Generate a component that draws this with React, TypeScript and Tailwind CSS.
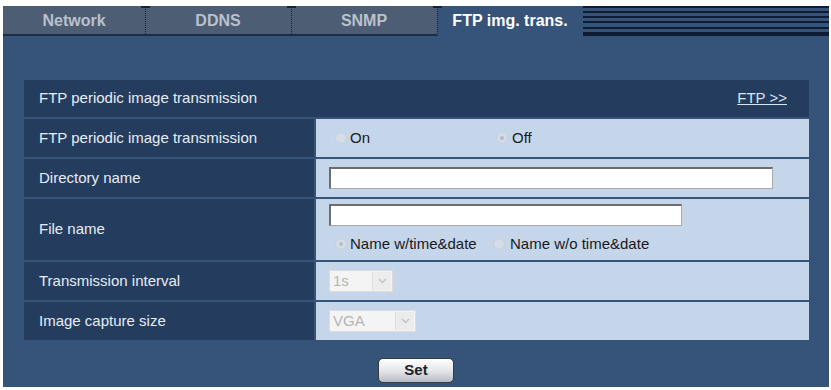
import React from "react";

const font = { fontFamily: '"Liberation Sans", Arial, sans-serif' };

function Radio({ checked }: { checked?: boolean }) {
  return (
    <span className="relative inline-block w-[12px] h-[12px] rounded-full bg-[#d3dce7] border border-[#c7d1dd] shrink-0">
      {checked && (
        <span className="absolute left-[3px] top-[3px] w-[4px] h-[4px] rounded-full bg-[#b3bdca]" />
      )}
    </span>
  );
}

function Select({ value, width }: { value: string; width: string }) {
  return (
    <div className={`flex h-[22px] border border-[#dcdcdc] bg-[#f4f4f4] ${width}`}>
      <div className="flex-1 flex items-center pl-[3px] text-[15px] text-[#b5b5b5]">{value}</div>
      <div className="w-[19px] my-[1px] mr-[1px] bg-[#ececec] border-l border-[#dedede] flex items-center justify-center">
        <svg width="9" height="6" viewBox="0 0 9 6">
          <path d="M1 1 L4.5 4.5 L8 1" fill="none" stroke="#c3c3c3" strokeWidth="1.5" />
        </svg>
      </div>
    </div>
  );
}

function Row({ label, h, children }: { label: string; h: string; children: React.ReactNode }) {
  return (
    <div className={`flex gap-[2px] ${h}`}>
      <div className="w-[290px] bg-[#243d5f] flex items-center pl-[15px] text-[15px] text-[#e8ecf2]">{label}</div>
      <div className="flex-1 bg-[#c6d6ea] flex flex-col justify-center pl-[13px] text-[15px] text-[#1a1a1a]">
        {children}
      </div>
    </div>
  );
}

function Tab({ label, active, first }: { label: string; active?: boolean; first?: boolean }) {
  return (
    <div
      className={`relative flex items-center justify-center font-bold text-[16px] ${
        active ? "w-[146px] bg-[#36547a] text-white" : "bg-[#4d5d74] text-[#b9c1cc] border-b-2 border-[#1c2d47]"
      } ${first ? "w-[142px]" : active ? "" : "w-[146px]"}`}
    >
      {!first && (
        <>
          <span className="absolute left-0 top-0 h-full border-l border-dotted border-[#15233a]" />
          <span className="absolute left-[-4px] top-0 w-[9px] h-[2px] bg-[#15233a]" />
        </>
      )}
      <span className={active ? "" : "pt-[2px]"}>{label}</span>
    </div>
  );
}

export default function App() {
  return (
    <div className="w-[831px] h-[390px] bg-white overflow-hidden" style={font}>
      <div className="ml-[3px] mt-[6px] w-[826px] h-[381px] bg-[#36547a] flex flex-col">
        <div className="flex h-[30px]">
          <Tab label="Network" first />
          <Tab label="DDNS" />
          <Tab label="SNMP" />
          <Tab label="FTP img. trans." active />
          <div className="flex-1 flex flex-col">
            <div className="h-[2px] bg-[#0e1c35]" />
            <div className="h-[3px] bg-[#36547a]" />
            <div className="h-[2px] bg-[#0e1c35]" />
            <div className="h-[3px] bg-[#36547a]" />
            <div className="h-[2px] bg-[#0e1c35]" />
            <div className="h-[3px] bg-[#36547a]" />
            <div className="h-[2px] bg-[#0e1c35]" />
            <div className="h-[4px] bg-[#36547a]" />
            <div className="h-[2px] bg-[#0e1c35]" />
            <div className="h-[3px] bg-[#36547a]" />
            <div className="h-[4px] bg-[#0e1c35]" />
          </div>
        </div>

        <div className="mt-[44px] ml-[21px] mr-[20px] flex flex-col gap-[2px]">
          <div className="h-[37px] bg-[#243d5f] flex items-center justify-between pl-[15px] pr-[22px] text-[15px] text-[#e8ecf2]">
            <span>FTP periodic image transmission</span>
            <span className="underline text-[#dbe3ee]">FTP &gt;&gt;</span>
          </div>
          <Row label="FTP periodic image transmission" h="h-[38px]">
            <div className="flex items-center pl-[6px]">
              <div className="flex items-center gap-[3px] w-[161px]">
                <Radio />
                <span>On</span>
              </div>
              <div className="flex items-center gap-[4px]">
                <Radio checked />
                <span>Off</span>
              </div>
            </div>
          </Row>
          <Row label="Directory name" h="h-[38px]">
            <div className="w-[444px] h-[22px] bg-white border border-[#a9a9a9] border-t-[#6d6d6d] border-l-[#6d6d6d] border-t-2 border-l-2" />
          </Row>
          <Row label="File name" h="h-[61px]">
            <div className="w-[353px] h-[22px] bg-white border border-[#a9a9a9] border-t-[#6d6d6d] border-l-[#6d6d6d] border-t-2 border-l-2" />
            <div className="flex items-center mt-[7px] pl-[6px]">
              <div className="flex items-center gap-[3px] w-[158px]">
                <Radio checked />
                <span>Name w/time&amp;date</span>
              </div>
              <div className="flex items-center gap-[5px]">
                <Radio />
                <span>Name w/o time&amp;date</span>
              </div>
            </div>
          </Row>
          <Row label="Transmission interval" h="h-[38px]">
            <Select value="1s" width="w-[64px]" />
          </Row>
          <Row label="Image capture size" h="h-[38px]">
            <Select value="VGA" width="w-[87px]" />
          </Row>
        </div>

        <div className="flex justify-center mt-[18px]">
          <button className="w-[76px] h-[25px] rounded-[5px] border border-[#3a3a3a] bg-gradient-to-b from-[#ffffff] via-[#e4e6ea] to-[#b7bcc4] text-[15px] font-bold text-[#222]">
            Set
          </button>
        </div>
      </div>
    </div>
  );
}
